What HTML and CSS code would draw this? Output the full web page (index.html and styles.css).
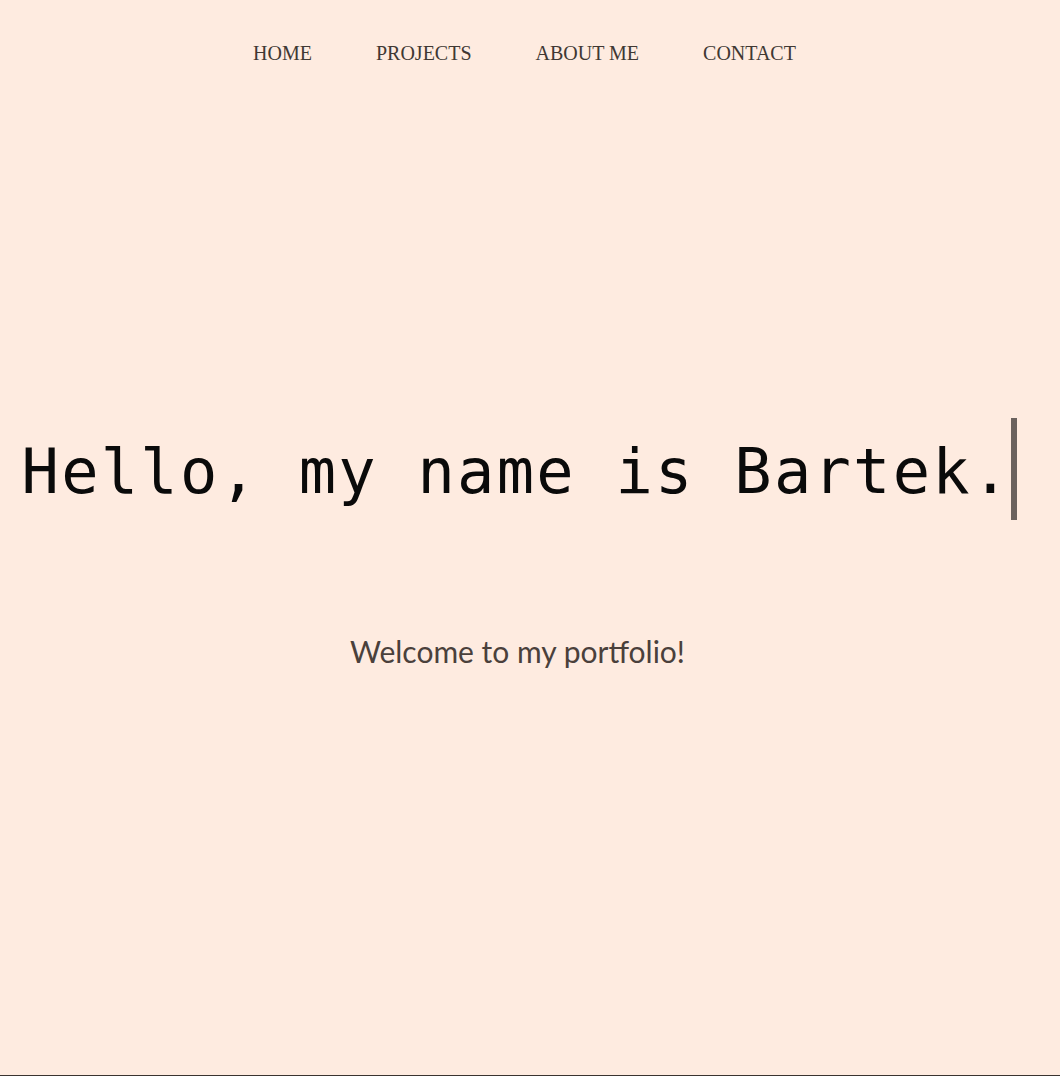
FILE: index.html
```html
<!DOCTYPE html>
<html lang="en">
<head>
<meta charset="utf-8">
<title>Bartek - Portfolio</title>
<link rel="stylesheet" href="styles.css">
</head>
<body>
<div class="page">
  <nav class="nav">
    <ul class="nav-list">
      <li><a class="nav-link" href="#">HOME</a></li>
      <li><a class="nav-link" href="#">PROJECTS</a></li>
      <li><a class="nav-link" href="#">ABOUT ME</a></li>
      <li><a class="nav-link" href="#">CONTACT</a></li>
    </ul>
  </nav>
  <section class="hero">
    <h1 class="typed">Hello, my name is Bartek.</h1>
    <p class="welcome">Welcome to my portfolio!</p>
  </section>
</div>
</body>
</html>
```

FILE: styles.css
```css
html, body {
  margin: 0;
  padding: 0;
}

body {
  background: #feebe0;
}

.page {
  min-height: 100vh;
  box-sizing: border-box;
  border-bottom: 1px solid #3a3330;
}

.nav {
  padding-top: 42px;
  padding-right: 11px;
}

.nav-list {
  list-style: none;
  margin: 0;
  padding: 0;
  display: flex;
  justify-content: center;
  gap: 64px;
}

.nav-link {
  font-family: "Liberation Serif", "Times New Roman", serif;
  font-size: 20px;
  line-height: 23px;
  color: #403833;
  text-decoration: none;
}

.hero {
  display: flex;
  flex-direction: column;
  align-items: center;
  padding-right: 25px;
  margin-top: 353px;
}

.typed {
  display: inline-block;
  margin: 0;
  padding-top: 5px;
  padding-left: 4px;
  font-family: "DejaVu Sans Mono", "Liberation Mono", monospace;
  font-weight: 400;
  font-size: 62px;
  line-height: 97px;
  letter-spacing: 2.27px;
  color: #0a0a0a;
  white-space: nowrap;
  border-right: 6px solid #6b625e;
}

.welcome {
  margin: 111px 0 0;
  font-family: Lato, "Open Sans", sans-serif;
  font-size: 30px;
  line-height: 40px;
  color: #4a403b;
}
```
